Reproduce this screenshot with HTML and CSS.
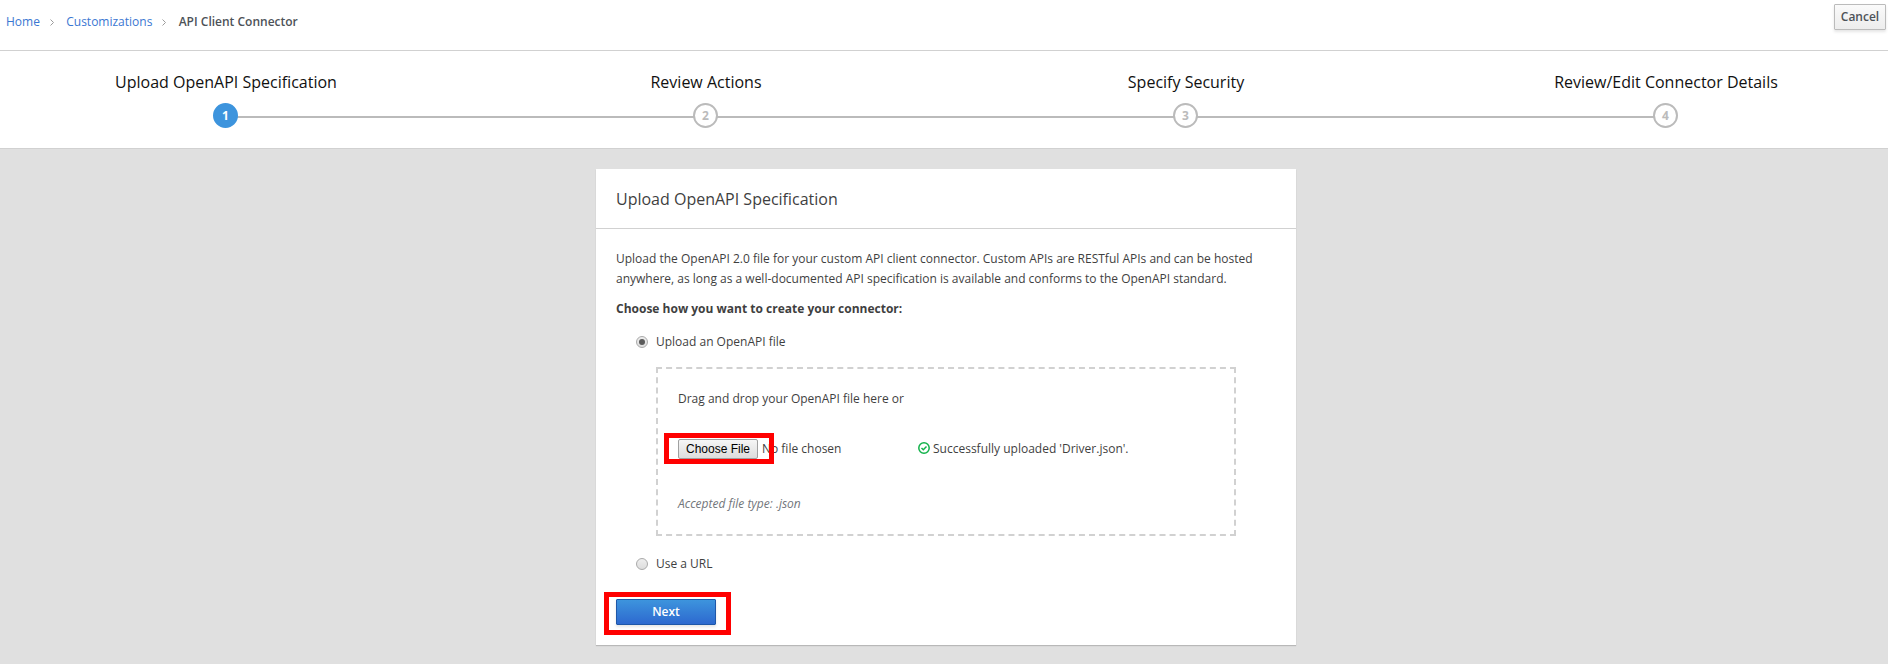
FILE: index.html
```html
<!DOCTYPE html>
<html lang="en">
<head>
<meta charset="utf-8">
<title>API Client Connector</title>
<link rel="stylesheet" href="styles.css">
</head>
<body>
<header class="toolbar">
  <nav class="breadcrumb">
    <a class="crumb-link" href="#">Home</a>
    <svg class="crumb-sep" viewBox="0 0 4 7"><path d="M0.5 0.5 L3.5 3.5 L0.5 6.5"/></svg>
    <a class="crumb-link" href="#">Customizations</a>
    <svg class="crumb-sep" viewBox="0 0 4 7"><path d="M0.5 0.5 L3.5 3.5 L0.5 6.5"/></svg>
    <span class="crumb-current">API Client Connector</span>
  </nav>
  <button class="btn btn-cancel" type="button">Cancel</button>
</header>
<ol class="steps">
  <li class="step active"><span class="step-title">Upload OpenAPI Specification</span><span class="step-track"><span class="step-number">1</span></span></li>
  <li class="step"><span class="step-title">Review Actions</span><span class="step-track"><span class="step-number">2</span></span></li>
  <li class="step"><span class="step-title">Specify Security</span><span class="step-track"><span class="step-number">3</span></span></li>
  <li class="step"><span class="step-title">Review/Edit Connector Details</span><span class="step-track"><span class="step-number">4</span></span></li>
</ol>
<main class="content">
  <section class="card">
    <h2 class="card-title">Upload OpenAPI Specification</h2>
    <div class="card-body">
      <p class="intro">Upload the OpenAPI 2.0 file for your custom API client connector. Custom APIs are RESTful APIs and can be hosted anywhere, as long as a well-documented API specification is available and conforms to the OpenAPI standard.</p>
      <p class="prompt">Choose how you want to create your connector:</p>
      <label class="option"><span class="radio checked"></span>Upload an OpenAPI file</label>
      <div class="dropzone">
        <p class="drop-text">Drag and drop your OpenAPI file here or</p>
        <div class="file-row">
          <div class="file-picker">
            <span class="choose-wrap"><button class="choose" type="button">Choose File</button><span class="mark mark-choose"></span></span>
            <span class="file-name">No file chosen</span>
          </div>
          <div class="status">
            <svg class="ok-icon" viewBox="0 0 12 12"><circle cx="6" cy="6" r="5.2"/><path d="M3.5 6 L5.3 7.7 L8.5 4.5"/></svg>
            <span>Successfully uploaded 'Driver.json'.</span>
          </div>
        </div>
        <p class="hint">Accepted file type: .json</p>
      </div>
      <label class="option option-url"><span class="radio"></span>Use a URL</label>
      <div class="next-wrap"><button class="btn btn-next" type="button">Next</button><span class="mark mark-next"></span></div>
    </div>
  </section>
</main>
</body>
</html>
```

FILE: styles.css
```css
* { box-sizing: border-box; }
body {
  margin: 0;
  height: 664px;
  overflow: hidden;
  background: #e0e0e0;
  color: #3f3f3f;
  font: 12px/20px "Open Sans", "Noto Sans", sans-serif;
}
p, h2, ol { margin: 0; padding: 0; }

.toolbar {
  display: flex;
  justify-content: space-between;
  align-items: flex-start;
  height: 51px;
  padding: 4px 2px 0 6px;
  background: #fff;
  border-bottom: 1px solid #d1d1d1;
}
.breadcrumb { display: flex; align-items: center; padding-top: 8px; }
.crumb-link { color: #3a77d2; text-decoration: none; }
.crumb-sep {
  width: 4px;
  height: 7px;
  margin: 1px 12.3px 0 10px;
  fill: none;
  stroke: #9c9c9c;
}
.crumb-current { color: #4d5258; font-weight: 600; }

.btn {
  height: 26px;
  padding: 0;
  border: 1px solid #bbb;
  border-radius: 1px;
  font: 600 12px/20px "Open Sans", "Noto Sans", sans-serif;
  box-shadow: 0 2px 3px rgba(3, 3, 3, .1);
}
.btn-cancel {
  width: 52px;
  color: #4d5258;
  background: linear-gradient(#fafafa, #ededed);
}

.steps {
  display: grid;
  grid-template-columns: repeat(4, 480px);
  width: 1888px;
  height: 98px;
  padding-top: 20px;
  overflow: hidden;
  list-style: none;
  background: #fff;
  border-bottom: 1px solid #d1d1d1;
}
.step { margin-left: -14px; margin-right: 14px; text-align: center; }
.step-title { display: block; height: 32px; color: #111; font-size: 16px; line-height: 22px; }
.step-track {
  display: flex;
  justify-content: center;
  height: 25px;
  background: linear-gradient(#bbb, #bbb) 0 13px / 100% 2px no-repeat;
}
.step:first-child .step-track { background-position: 240px 13px; }
.step:last-child .step-track { background-size: 50% 2px; }
.step-number {
  width: 25px;
  height: 25px;
  margin-right: 1px;
  border: 2px solid #bbb;
  border-radius: 50%;
  background: #fff;
  color: #bbb;
  font-weight: 700;
  line-height: 21px;
}
.active .step-number { border-color: #3d94dd; background: #3d94dd; color: #fff; }

.content { padding: 20px 0 0 596px; }
.card {
  width: 700px;
  height: 476px;
  background: #fff;
  box-shadow: 0 1px 1px rgba(3, 3, 3, .18);
}
.card-title {
  height: 60px;
  padding: 19px 20px 0;
  border-bottom: 1px solid #d1d1d1;
  font-size: 16px;
  font-weight: 400;
  line-height: 22px;
}
.card-body { padding: 20px 20px 0; }
.prompt { margin: 10px 0 13px; font-weight: 700; }
.option { display: flex; align-items: center; margin-left: 20px; }
.radio {
  display: flex;
  width: 12px;
  height: 12px;
  margin-right: 8px;
  border: 1px solid #aaa;
  border-radius: 50%;
  background: linear-gradient(#eee, #ddd);
}
.checked::after {
  content: "";
  width: 6px;
  height: 6px;
  margin: 2px;
  border-radius: 50%;
  background: #5a5a5a;
}
.dropzone {
  width: 580px;
  height: 169px;
  margin: 15px 0 18px 40px;
  padding: 20px;
  border: 2px dashed #d1d1d1;
}
.file-row { display: grid; grid-template-columns: 240px 1fr; margin: 30px 0 35px; }
.file-picker, .status { display: flex; align-items: center; }
.choose-wrap { position: relative; display: flex; margin-right: 4px; }
.choose {
  width: 80px;
  height: 20px;
  padding: 0;
  border: 1px solid #a0a0a0;
  border-radius: 2px;
  background: linear-gradient(#f6f6f6, #ddd);
  color: #000;
  font: 12px/16px "Liberation Sans", Arial, sans-serif;
}
.ok-icon { width: 12px; height: 12px; margin: -2px 3px 0 0; fill: none; stroke: #12b24a; stroke-width: 1.5; }
.hint { color: #72767b; font-style: italic; }
.next-wrap { position: relative; width: 100px; margin-top: 25px; }
.btn-next {
  display: block;
  width: 100px;
  border-color: #1f57a8;
  background: linear-gradient(#3d94dd, #2d69cf);
  color: #fff;
}
.mark { position: absolute; border: 5px solid #f00; }
.mark-choose { left: -14px; top: -6px; width: 110px; height: 31px; }
.mark-next { left: -12px; top: -7px; width: 127px; height: 43px; }
```
